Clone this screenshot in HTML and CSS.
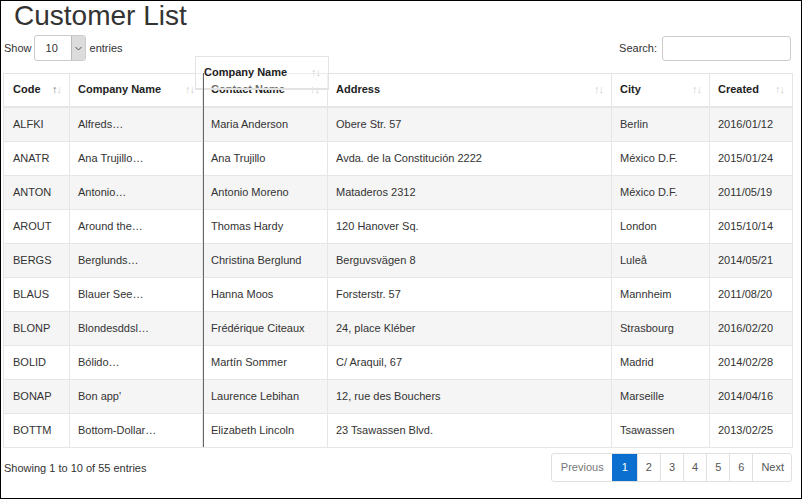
FILE: index.html
```html
<!DOCTYPE html>
<html>
<head>
<meta charset="utf-8">
<link rel="stylesheet" href="styles.css">
</head>
<body>
<div class="frame">
  <h1 class="title">Customer List</h1>
  <div class="controls">
    <div class="length">
      <span>Show</span>
      <div class="select"><span class="sel-val">10</span><span class="sel-btn"><svg width="7" height="5" viewBox="0 0 7 5"><path d="M0.5 1 L3.5 4 L6.5 1" fill="none" stroke="#555" stroke-width="1"/></svg></span></div>
      <span>entries</span>
    </div>
    <div class="search">
      <span>Search:</span>
      <div class="input"></div>
    </div>
  </div>
  <div class="table-wrap">
    <table class="grid">
      <colgroup>
        <col class="c-code"><col class="c-company"><col class="c-contact"><col class="c-address"><col class="c-city"><col class="c-created">
      </colgroup>
      <thead>
        <tr>
          <th><div class="th-in"><span>Code</span><span class="sort asc"><i class="up">↑</i><i class="dn">↓</i></span></div></th>
          <th><div class="th-in"><span>Company Name</span><span class="sort"><i class="up">↑</i><i class="dn">↓</i></span></div></th>
          <th><div class="th-in"><span>Contact Name</span><span class="sort"><i class="up">↑</i><i class="dn">↓</i></span></div></th>
          <th><div class="th-in"><span>Address</span><span class="sort"><i class="up">↑</i><i class="dn">↓</i></span></div></th>
          <th><div class="th-in"><span>City</span><span class="sort"><i class="up">↑</i><i class="dn">↓</i></span></div></th>
          <th><div class="th-in"><span>Created</span><span class="sort"><i class="up">↑</i><i class="dn">↓</i></span></div></th>
        </tr>
      </thead>
      <tbody>
        <tr class="odd"><td>ALFKI</td><td>Alfreds…</td><td>Maria Anderson</td><td>Obere Str. 57</td><td>Berlin</td><td>2016/01/12</td></tr>
        <tr><td>ANATR</td><td>Ana Trujillo…</td><td>Ana Trujillo</td><td>Avda. de la Constitución 2222</td><td>México D.F.</td><td>2015/01/24</td></tr>
        <tr class="odd"><td>ANTON</td><td>Antonio…</td><td>Antonio Moreno</td><td>Mataderos 2312</td><td>México D.F.</td><td>2011/05/19</td></tr>
        <tr><td>AROUT</td><td>Around the…</td><td>Thomas Hardy</td><td>120 Hanover Sq.</td><td>London</td><td>2015/10/14</td></tr>
        <tr class="odd"><td>BERGS</td><td>Berglunds…</td><td>Christina Berglund</td><td>Berguvsvägen 8</td><td>Luleå</td><td>2014/05/21</td></tr>
        <tr><td>BLAUS</td><td>Blauer See…</td><td>Hanna Moos</td><td>Forsterstr. 57</td><td>Mannheim</td><td>2011/08/20</td></tr>
        <tr class="odd"><td>BLONP</td><td>Blondesddsl…</td><td>Frédérique Citeaux</td><td>24, place Kléber</td><td>Strasbourg</td><td>2016/02/20</td></tr>
        <tr><td>BOLID</td><td>Bólido…</td><td>Martín Sommer</td><td>C/ Araquil, 67</td><td>Madrid</td><td>2014/02/28</td></tr>
        <tr class="odd"><td>BONAP</td><td>Bon app'</td><td>Laurence Lebihan</td><td>12, rue des Bouchers</td><td>Marseille</td><td>2014/04/16</td></tr>
        <tr><td>BOTTM</td><td>Bottom-Dollar…</td><td>Elizabeth Lincoln</td><td>23 Tsawassen Blvd.</td><td>Tsawassen</td><td>2013/02/25</td></tr>
      </tbody>
    </table>
    <div class="drag-clone"><div class="th-in"><span>Company Name</span><span class="sort"><i class="up">↑</i><i class="dn">↓</i></span></div></div>
    <div class="drop-pointer"></div>
  </div>
  <div class="footer">
    <div class="info">Showing 1 to 10 of 55 entries</div>
    <ul class="pager">
      <li class="pg disabled">Previous</li>
      <li class="pg active">1</li>
      <li class="pg">2</li>
      <li class="pg">3</li>
      <li class="pg">4</li>
      <li class="pg">5</li>
      <li class="pg">6</li>
      <li class="pg">Next</li>
    </ul>
  </div>
</div>
</body>
</html>
```

FILE: styles.css
```css
html, body {
  margin: 0;
  padding: 0;
  background: #fff;
}
body {
  font-family: "Liberation Sans", Arial, sans-serif;
  color: #333;
  font-size: 11px;
}
.frame {
  width: 802px;
  height: 499px;
  box-sizing: border-box;
  border: 1px solid #000;
  overflow: hidden;
  display: flex;
  flex-direction: column;
}
.title {
  margin: 0 0 0 13px;
  font-size: 28px;
  font-weight: normal;
  line-height: 30px;
  color: #333;
}
.controls {
  margin: 4px 10px 0 3px;
  height: 26px;
  display: flex;
  justify-content: space-between;
  align-items: center;
}
.length, .search {
  display: flex;
  align-items: center;
}
.length { gap: 2px; }
.search { gap: 5px; }
.select {
  width: 52px;
  height: 26px;
  box-sizing: border-box;
  border: 1px solid #ccc;
  border-radius: 3px;
  display: flex;
  align-items: stretch;
  justify-content: space-between;
  margin-right: 2px;
}
.sel-val {
  padding-left: 11px;
  line-height: 24px;
  font-size: 11px;
}
.sel-btn {
  width: 13px;
  background: #dcdcdc;
  border-left: 1px solid #bbb;
  display: flex;
  align-items: center;
  justify-content: center;
}
.input {
  width: 129px;
  height: 25px;
  box-sizing: border-box;
  border: 1px solid #ccc;
  border-radius: 3px;
}
.table-wrap {
  position: relative;
  margin: 12px 0 0 2px;
  width: 790px;
}
.grid {
  width: 790px;
  table-layout: fixed;
  border-collapse: separate;
  border-spacing: 0;
  border-top: 1px solid #e3e3e3;
}
.c-code { width: 67px; }
.c-company { width: 133px; }
.c-contact { width: 125px; }
.c-address { width: 284px; }
.c-city { width: 98px; }
.c-created { width: 83px; }
.grid th, .grid td {
  border-right: 1px solid #e6e6e6;
  border-bottom: 1px solid #e6e6e6;
  text-align: left;
  white-space: nowrap;
  overflow: hidden;
}
.grid th:first-child, .grid td:first-child {
  border-left: 1px solid #e6e6e6;
  padding-left: 9px;
}
.grid th {
  padding: 9px 8px 11px 8px;
  line-height: 12px;
  font-weight: bold;
  font-size: 11px;
  color: #222;
  border-bottom: 2px solid #e6e6e6;
}
.grid td {
  padding: 10px 8px;
  line-height: 13px;
  font-size: 11px;
  color: #333;
}
.grid tr.odd td {
  background: #f5f5f5;
}
.th-in {
  display: flex;
  justify-content: space-between;
  align-items: center;
}
.sort {
  display: flex;
  font-size: 11px;
  font-weight: normal;
  color: #cfcfcf;
  letter-spacing: -1px;
}
.sort i { font-style: normal; }
.sort.asc .up { color: #777; }
.drag-clone {
  position: absolute;
  left: 192px;
  top: -17px;
  width: 134px;
  height: 34px;
  box-sizing: border-box;
  border: 1px solid #e3e3e3;
  border-bottom-width: 2px;
  padding: 9px 8px 0 8px;
  line-height: 12px;
  font-weight: bold;
  color: #222;
  background: rgba(255, 255, 255, 0.35);
}
.drop-pointer {
  position: absolute;
  left: 200px;
  top: 0;
  width: 1px;
  height: 374px;
  background: #666;
}
.footer {
  margin: 5px 9px 0 3px;
  display: flex;
  justify-content: space-between;
  align-items: center;
}
.info {
  font-size: 11px;
  color: #333;
}
.pager {
  list-style: none;
  margin: 0;
  padding: 0;
  display: flex;
  border: 1px solid #e0e0e0;
  border-radius: 3px;
  height: 29px;
  box-sizing: border-box;
}
.pg {
  padding: 0 8px;
  line-height: 27px;
  font-size: 11px;
  color: #555;
  border-left: 1px solid #e0e0e0;
}
.pg:first-child { border-left: none; padding: 0 8px 0 9px; }
.pg:last-child { padding: 0 7px 0 8px; }
.pg.disabled { color: #777; }
.pg.active {
  background: #0b6fcf;
  color: #fff;
  padding: 0 9px;
  border-left-color: #0b6fcf;
}
```
